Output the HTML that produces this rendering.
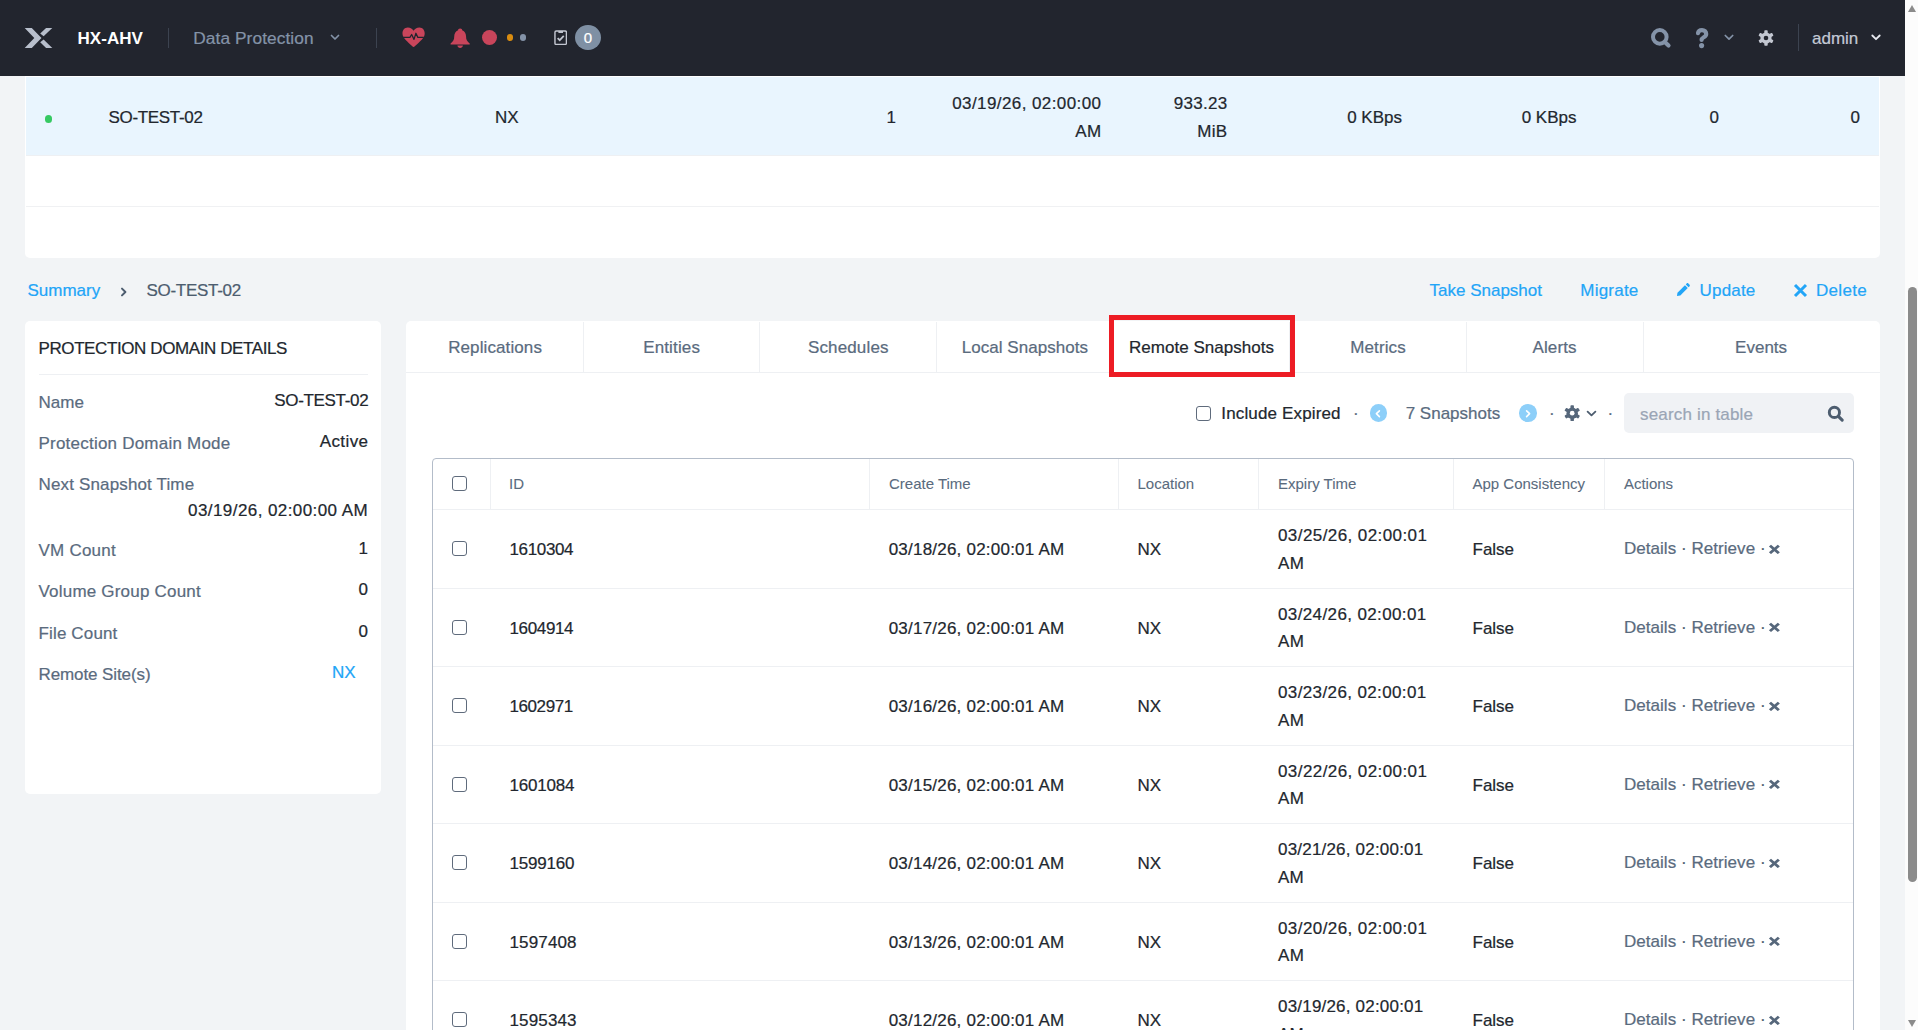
<!DOCTYPE html>
<html lang="en">
<head>
<meta charset="utf-8">
<title>HX-AHV - Data Protection</title>
<style>
*{box-sizing:border-box;}
html,body{margin:0;padding:0;}
html{overflow:hidden;}
body{width:1918px;height:1030px;overflow:hidden;position:relative;background:#f2f4f6;
  font-family:"Liberation Sans",sans-serif;font-size:17px;color:#22272e;-webkit-text-stroke:0.22px currentColor;}
.abs{position:absolute;}
.nw{white-space:nowrap;}
/* ---------- header ---------- */
#hdr{position:absolute;left:0;top:0;width:1905px;height:76px;background:#22252e;z-index:5;}
#hdr .t{position:absolute;white-space:nowrap;line-height:20px;top:29.2px;}
.vsep{position:absolute;width:1px;background:#3c4350;}
/* ---------- scrollbar ---------- */
#sb{position:absolute;left:1905px;top:0;width:13px;height:1030px;background:#fcfcfc;}
#sb .thumb{position:absolute;left:3px;top:287px;width:9px;height:595px;border-radius:5px;background:#8b8b8b;}
#sb .up{position:absolute;left:3px;top:5px;width:0;height:0;border-left:4.5px solid transparent;border-right:4.5px solid transparent;border-bottom:7px solid #8b8b8b;}
#sb .dn{position:absolute;left:3px;top:1020px;width:0;height:0;border-left:4.5px solid transparent;border-right:4.5px solid transparent;border-top:7px solid #8b8b8b;}
/* ---------- top table card ---------- */
#topcard{position:absolute;left:25px;top:70px;width:1855px;height:188px;background:#fff;border-radius:5px;}
#selrow{position:absolute;left:1px;top:7px;width:1853px;height:79px;background:#e9f5fe;border-bottom:1px solid #eef0f3;}
#topcard .ln{position:absolute;left:1px;width:1853px;height:1px;background:#f0f1f3;top:136px;}
.rt{position:absolute;white-space:nowrap;line-height:28px;}
/* ---------- breadcrumb / actions ---------- */
.bc{position:absolute;top:279px;line-height:24px;white-space:nowrap;}
.lnk{color:#22a5f7;}
/* ---------- left card ---------- */
#lcard{position:absolute;left:25px;top:321px;width:356px;height:473px;background:#fff;border-radius:5px;}
#lcard .lab{position:absolute;left:13.5px;color:#5a6b7e;white-space:nowrap;line-height:20px;}
#lcard .val{position:absolute;right:13px;white-space:nowrap;line-height:20px;color:#22272e;}
/* ---------- right card ---------- */
#rcard{position:absolute;left:406px;top:321px;width:1474px;height:720px;background:#fff;border-radius:5px 5px 0 0;}
.tab{position:absolute;top:0.8px;height:51px;line-height:52px;text-align:center;color:#5a6b7e;white-space:nowrap;}
#tabline{position:absolute;left:0;top:51px;width:1474px;height:1px;background:#eef0f3;}
#redbox{position:absolute;left:1109px;top:315px;width:186px;height:62px;border:5px solid #ed1c24;}
/* ---------- snapshot table ---------- */
#tbl{position:absolute;left:432px;top:458px;width:1422px;height:600px;border:1px solid #b3bcc9;border-radius:4px 4px 0 0;}
#tbl .hl{position:absolute;left:0;width:1420px;height:1px;background:#eef0f3;}
#tbl .vl{position:absolute;top:0;width:1px;height:50px;background:#eef0f3;}
#tbl .th{position:absolute;top:15.3px;line-height:20px;font-size:15px;color:#5a6b7e;white-space:nowrap;-webkit-text-stroke:0.08px currentColor;}
#tbl .td{position:absolute;white-space:nowrap;line-height:27.5px;color:#22272e;}
#tbl .ac{color:#5a6b7e;}
.tdot{color:#5a6b7e;line-height:20px;}
.dot{color:#4d5d6f;}
.cb{position:absolute;width:15px;height:15px;border:1.5px solid #5f6b7c;border-radius:3px;background:#fff;}
</style>
</head>
<body>

<!-- HEADER -->
<div id="hdr">
  <!-- logo X -->
  <svg class="abs" style="left:20px;top:22px" width="40" height="32" viewBox="0 0 40 32">
    <path d="M4.7 5.9 L11.8 5.9 L21.5 16 L11.8 25.9 L4.7 25.9 L14.3 16 Z" fill="#b8bfcc"/>
    <path d="M26.1 5.9 L32.3 5.9 L23.6 14.3 L20.2 11.5 Z" fill="#b8bfcc"/>
    <path d="M20.2 20.3 L23.6 17.5 L32.3 25.9 L26.1 25.9 Z" fill="#b8bfcc"/>
  </svg>
  <div class="t" style="left:77.5px;font-weight:bold;color:#fff;font-size:17px;letter-spacing:0.05px;-webkit-text-stroke:0">HX-AHV</div>
  <div class="vsep" style="left:168px;top:28px;height:20px"></div>
  <div class="t" style="left:193.3px;top:28.3px;color:#8493a8;font-size:17.3px;letter-spacing:0.08px">Data Protection</div>
  <svg class="abs" style="left:330px;top:34px" width="10" height="8" viewBox="0 0 10 8"><path d="M1.5 1.5 L5 5 L8.5 1.5" fill="none" stroke="#8493a8" stroke-width="1.7" stroke-linecap="round" stroke-linejoin="round"/></svg>
  <div class="vsep" style="left:376px;top:28px;height:20px"></div>
  <!-- heart -->
  <svg class="abs" style="left:401.7px;top:27.1px" width="23.2" height="20.6" viewBox="0 0 24 21" preserveAspectRatio="none">
    <path d="M12 20.5 C11 19.6 3.2 13.6 1.2 9.6 C-0.6 5.8 1.2 0.6 6 0.6 C8.8 0.6 10.8 2 12 3.8 C13.2 2 15.2 0.6 18 0.6 C22.8 0.6 24.6 5.8 22.8 9.6 C20.8 13.6 13 19.6 12 20.5 Z" fill="#c9455b"/>
    <path d="M1 10.6 L8.2 10.6 L10 7.6 L12.4 12.6 L14.4 6.4 L16.4 10.6 L22.6 10.6" fill="none" stroke="#22252e" stroke-width="1.3" stroke-linejoin="round"/>
  </svg>
  <!-- bell -->
  <svg class="abs" style="left:449.8px;top:27.6px" width="20.3" height="20.4" viewBox="0 0 21 21" preserveAspectRatio="none">
    <path d="M10.5 0.5 C12 0.5 12.6 1.4 12.6 2.2 C15.4 3.2 16.6 5.8 16.6 8.6 C16.6 12.4 17.8 14.2 20.4 16 L20.4 17 L0.6 17 L0.6 16 C3.2 14.2 4.4 12.4 4.4 8.6 C4.4 5.8 5.6 3.2 8.4 2.2 C8.4 1.4 9 0.5 10.5 0.5 Z" fill="#c9455b"/>
    <path d="M7.6 18 L13.4 18 C13.2 19.6 12 20.5 10.5 20.5 C9 20.5 7.8 19.6 7.6 18 Z" fill="#c9455b"/>
  </svg>
  <div class="abs" style="left:481.5px;top:29.6px;width:15.6px;height:15.6px;border-radius:50%;background:#c9455b"></div>
  <div class="abs" style="left:506.6px;top:34.1px;width:6.6px;height:6.6px;border-radius:50%;background:#d98c10"></div>
  <div class="abs" style="left:519.6px;top:34.1px;width:6.6px;height:6.6px;border-radius:50%;background:#8493a8"></div>
  <!-- clipboard -->
  <svg class="abs" style="left:553.7px;top:29.8px" width="13.4" height="15.4" viewBox="0 0 14 16" preserveAspectRatio="none">
    <rect x="1" y="1" width="12" height="14" rx="1.3" fill="none" stroke="#c3c7d1" stroke-width="1.5"/>
    <rect x="4.6" y="1" width="4.8" height="2.1" fill="#c3c7d1"/>
    <path d="M3.8 8.4 L6 10.6 L10.2 6.2" fill="none" stroke="#c3c7d1" stroke-width="1.8"/>
  </svg>
  <div class="abs" style="left:574.8px;top:24.5px;width:26.2px;height:25.8px;border-radius:50%;background:#7f90a4;color:#fff;text-align:center;line-height:25.4px;font-size:15px">0</div>
  <!-- right side -->
  <svg class="abs" style="left:1648px;top:26px" width="26" height="24" viewBox="0 0 26 24">
    <circle cx="11.8" cy="10.9" r="6.8" fill="none" stroke="#8493a8" stroke-width="4"/>
    <path d="M16.8 15.9 L20.5 19.5" stroke="#8493a8" stroke-width="4.2" stroke-linecap="round"/>
  </svg>
  <svg class="abs" style="left:1694px;top:26px" width="16" height="24" viewBox="0 0 16 24">
    <path d="M4 7.2 C4.4 4.8 6.2 4.1 8 4.1 C10.4 4.1 12.2 5.6 12.2 7.9 C12.2 11.4 7.6 11 7.6 14" fill="none" stroke="#8493a8" stroke-width="4.2" stroke-linecap="round" stroke-linejoin="round"/>
    <circle cx="7.6" cy="19.6" r="2.55" fill="#8493a8"/>
  </svg>
  <svg class="abs" style="left:1723.5px;top:34px" width="10" height="8" viewBox="0 0 10 8"><path d="M1.3 1.5 L5 5.2 L8.7 1.5" fill="none" stroke="#8493a8" stroke-width="1.7" stroke-linecap="round" stroke-linejoin="round"/></svg>
  <!-- gear -->
  <svg class="abs" style="left:1757.5px;top:29.7px" width="16" height="16" viewBox="0 0 16 16">
    <g fill="#c3c7d1">
      <circle cx="8" cy="8" r="5.6"/>
      <rect x="6.3" y="0.2" width="3.4" height="15.6" rx="0.8"/>
      <rect x="6.3" y="0.2" width="3.4" height="15.6" rx="0.8" transform="rotate(60 8 8)"/>
      <rect x="6.3" y="0.2" width="3.4" height="15.6" rx="0.8" transform="rotate(120 8 8)"/>
    </g>
    <circle cx="8" cy="8" r="2.3" fill="#22252e"/>
  </svg>
  <div class="vsep" style="left:1798px;top:24px;height:27px"></div>
  <div class="t" style="left:1812px;color:#c3c9d5;font-size:17px">admin</div>
  <svg class="abs" style="left:1870.5px;top:34px" width="10" height="8" viewBox="0 0 10 8"><path d="M1.3 1.5 L5 5.2 L8.7 1.5" fill="none" stroke="#e8eaf0" stroke-width="1.8" stroke-linecap="round" stroke-linejoin="round"/></svg>
</div>

<!-- TOP TABLE CARD -->
<div id="topcard">
  <div id="selrow"></div>
  <div class="ln"></div>
  <div class="abs" style="left:19.8px;top:45.3px;width:7.4px;height:7.4px;border-radius:50%;background:#36c962"></div>
  <div class="rt" style="left:83.5px;top:34.2px;letter-spacing:-0.32px">SO-TEST-02</div>
  <div class="rt" style="left:470px;top:34.2px">NX</div>
  <div class="rt" style="right:984px;top:34.2px">1</div>
  <div class="rt" style="right:778.5px;top:20.2px;text-align:right;letter-spacing:0.42px">03/19/26, 02:00:00<br>AM</div>
  <div class="rt" style="right:652.5px;top:20.2px;text-align:right;letter-spacing:0.3px">933.23<br>MiB</div>
  <div class="rt" style="right:478px;top:34.2px">0 KBps</div>
  <div class="rt" style="right:303.5px;top:34.2px">0 KBps</div>
  <div class="rt" style="right:161px;top:34.2px">0</div>
  <div class="rt" style="right:20px;top:34.2px">0</div>
</div>

<!-- BREADCRUMB + ACTIONS -->
<div class="bc lnk" style="left:27.5px">Summary</div>
<svg class="abs" style="left:119.5px;top:286px" width="9" height="12" viewBox="0 0 9 12"><path d="M2 2.6 L5.4 6 L2 9.4" fill="none" stroke="#4d5d6f" stroke-width="2" stroke-linecap="round" stroke-linejoin="round"/></svg>
<div class="bc" style="left:146.5px;color:#4d5d6f;letter-spacing:-0.3px">SO-TEST-02</div>
<div class="bc lnk" style="left:1429.5px">Take Snapshot</div>
<div class="bc lnk" style="left:1580.3px;letter-spacing:0.22px">Migrate</div>
<svg class="abs" style="left:1676.4px;top:282.6px" width="14" height="14" viewBox="0 0 15 15">
  <path d="M1 14 L1.6 10.4 L9.6 2.4 L12.6 5.4 L4.6 13.4 Z" fill="#22a5f7"/>
  <path d="M10.5 1.5 L11.6 0.4 C12 0 12.6 0 13 0.4 L14.6 2 C15 2.4 15 3 14.6 3.4 L13.5 4.5 Z" fill="#22a5f7"/>
</svg>
<div class="bc lnk" style="left:1699.5px;letter-spacing:0.2px">Update</div>
<svg class="abs" style="left:1792.5px;top:282.5px" width="15" height="15" viewBox="0 0 15 15"><path d="M2 2 L13 13 M13 2 L2 13" stroke="#22a5f7" stroke-width="3" stroke-linecap="butt"/></svg>
<div class="bc lnk" style="left:1816px;letter-spacing:0.3px">Delete</div>

<!-- LEFT CARD -->
<div id="lcard">
  <div class="lab" style="top:18.4px;color:#22272e;letter-spacing:-0.4px">PROTECTION DOMAIN DETAILS</div>
  <div class="abs" style="left:13.5px;top:53px;width:329.5px;height:1px;background:#eef0f3"></div>
  <div class="lab" style="top:72.0px">Name</div>
  <div class="val" style="top:70.4px;letter-spacing:-0.32px;right:12.7px">SO-TEST-02</div>
  <div class="lab" style="top:113.4px;letter-spacing:0.22px">Protection Domain Mode</div>
  <div class="val" style="top:111.2px;letter-spacing:0.4px;right:12.6px">Active</div>
  <div class="lab" style="top:154.3px;letter-spacing:0.15px">Next Snapshot Time</div>
  <div class="val" style="top:179.6px;letter-spacing:0.42px">03/19/26, 02:00:00 AM</div>
  <div class="lab" style="top:220.0px;letter-spacing:0.22px">VM Count</div>
  <div class="val" style="top:217.8px">1</div>
  <div class="lab" style="top:261.2px;letter-spacing:0.2px">Volume Group Count</div>
  <div class="val" style="top:259.0px">0</div>
  <div class="lab" style="top:302.8px;letter-spacing:0.15px">File Count</div>
  <div class="val" style="top:300.6px">0</div>
  <div class="lab" style="top:344.0px;letter-spacing:-0.1px">Remote Site(s)</div>
  <div class="val lnk" style="top:342.0px;right:25.5px;color:#22a5f7">NX</div>
</div>

<!-- RIGHT CARD -->
<div id="rcard">
  <div class="tab" style="left:9.1px;width:160px;letter-spacing:0.1px">Replications</div>
  <div class="tab" style="left:185.65px;width:160px;letter-spacing:0.15px">Entities</div>
  <div class="tab" style="left:362.3px;width:160px;letter-spacing:0.15px">Schedules</div>
  <div class="tab" style="left:538.9px;width:160px;letter-spacing:0.05px">Local Snapshots</div>
  <div class="tab" style="left:715.5px;width:160px;letter-spacing:0.02px;color:#22272e">Remote Snapshots</div>
  <div class="tab" style="left:892px;width:160px;letter-spacing:0.12px">Metrics</div>
  <div class="tab" style="left:1068.6px;width:160px;letter-spacing:0.15px">Alerts</div>
  <div class="tab" style="left:1275.1px;width:160px;letter-spacing:0px">Events</div>
  <div class="abs" style="left:177px;top:1px;width:1px;height:50px;background:#eef0f3"></div>
  <div class="abs" style="left:353px;top:1px;width:1px;height:50px;background:#eef0f3"></div>
  <div class="abs" style="left:530px;top:1px;width:1px;height:50px;background:#eef0f3"></div>
  <div class="abs" style="left:707px;top:1px;width:1px;height:50px;background:#eef0f3"></div>
  <div class="abs" style="left:883px;top:1px;width:1px;height:50px;background:#eef0f3"></div>
  <div class="abs" style="left:1060px;top:1px;width:1px;height:50px;background:#eef0f3"></div>
  <div class="abs" style="left:1237px;top:1px;width:1px;height:50px;background:#eef0f3"></div>
  <div id="tabline"></div>
</div>

<!-- TOOLBAR -->
<div class="cb" style="left:1196px;top:406px"></div>
<div class="abs nw" style="left:1221.3px;top:404px;line-height:20px;letter-spacing:0.15px">Include Expired</div>
<div class="abs nw tdot" style="left:1353px;top:404px">·</div>
<div class="abs" style="left:1369.8px;top:404.3px;width:17.6px;height:17.6px;border-radius:50%;background:#8dcff9"></div>
<svg class="abs" style="left:1374px;top:408.5px" width="8" height="10" viewBox="0 0 8 10"><path d="M5.4 1.8 L2.4 4.7 L5.4 7.6" fill="none" stroke="#fff" stroke-width="1.6" stroke-linecap="round" stroke-linejoin="round"/></svg>
<div class="abs nw" style="left:1405.7px;top:404px;line-height:20px;color:#5a6b7e;letter-spacing:0px">7 Snapshots</div>
<div class="abs" style="left:1519px;top:404.3px;width:17.6px;height:17.6px;border-radius:50%;background:#8dcff9"></div>
<svg class="abs" style="left:1524.4px;top:408.5px" width="8" height="10" viewBox="0 0 8 10"><path d="M2.6 1.8 L5.6 4.7 L2.6 7.6" fill="none" stroke="#fff" stroke-width="1.6" stroke-linecap="round" stroke-linejoin="round"/></svg>
<div class="abs nw tdot" style="left:1549px;top:404px">·</div>
<svg class="abs" style="left:1564px;top:405px" width="16.4" height="16.4" viewBox="0 0 16 16">
  <g fill="#56677b">
    <circle cx="8" cy="8" r="5.6"/>
    <rect x="6.3" y="0.2" width="3.4" height="15.6" rx="0.8"/>
    <rect x="6.3" y="0.2" width="3.4" height="15.6" rx="0.8" transform="rotate(60 8 8)"/>
    <rect x="6.3" y="0.2" width="3.4" height="15.6" rx="0.8" transform="rotate(120 8 8)"/>
  </g>
  <circle cx="8" cy="8" r="2.3" fill="#fff"/>
</svg>
<svg class="abs" style="left:1586px;top:409.5px" width="11" height="8" viewBox="0 0 11 8"><path d="M1.6 1.6 L5.5 5.4 L9.4 1.6" fill="none" stroke="#4d5d6f" stroke-width="1.8" stroke-linecap="round" stroke-linejoin="round"/></svg>
<div class="abs nw tdot" style="left:1607.5px;top:404px">·</div>
<div class="abs" style="left:1624.3px;top:392.6px;width:229.4px;height:40.4px;border-radius:5px;background:#f0f2f5"></div>
<div class="abs nw" style="left:1640px;top:404.5px;line-height:20px;color:#9aa5b5;letter-spacing:0.17px">search in table</div>
<svg class="abs" style="left:1826.5px;top:404.5px" width="18" height="18" viewBox="0 0 18 18">
  <circle cx="7.4" cy="7.4" r="5.1" fill="none" stroke="#4d5d6f" stroke-width="2.9"/>
  <path d="M11.4 11.4 L15.2 15.2" stroke="#4d5d6f" stroke-width="3.1" stroke-linecap="round"/>
</svg>

<!-- SNAPSHOT TABLE -->
<div id="tbl">
  <div class="cb" style="left:19px;top:16.6px"></div>
  <div class="vl" style="left:57px"></div>
  <div class="vl" style="left:436px"></div>
  <div class="vl" style="left:685px"></div>
  <div class="vl" style="left:825px"></div>
  <div class="vl" style="left:1020px"></div>
  <div class="vl" style="left:1171px"></div>
  <div class="th" style="left:76px">ID</div>
  <div class="th" style="left:456px">Create Time</div>
  <div class="th" style="left:704.5px">Location</div>
  <div class="th" style="left:845px">Expiry Time</div>
  <div class="th" style="left:1039.5px">App Consistency</div>
  <div class="th" style="left:1190.9px">Actions</div>
  <div class="hl" style="top:50px"></div>
  <div class="hl" style="top:129px"></div>
  <div class="cb" style="left:19px;top:82.3px"></div>
  <div class="td" style="left:76.5px;top:77.15px;letter-spacing:-0.36px">1610304</div>
  <div class="td" style="left:455.7px;top:77.15px;letter-spacing:0.22px">03/18/26, 02:00:01 AM</div>
  <div class="td" style="left:704.5px;top:77.15px">NX</div>
  <div class="td" style="left:845px;top:63.4px;letter-spacing:0.42px">03/25/26, 02:00:01<br>AM</div>
  <div class="td" style="left:1039.5px;top:77.15px">False</div>
  <div class="td ac" style="left:1190.9px;top:76.05px;letter-spacing:0.05px">Details <span class="dot">·</span> Retrieve <span class="dot">·</span></div>
  <svg class="abs" style="left:1335.1px;top:84.5px" width="12.8" height="10.9" viewBox="0 0 13 13" preserveAspectRatio="none"><path d="M2 2 L11 11 M11 2 L2 11" stroke="#56677b" stroke-width="3"/></svg>
  <div class="hl" style="top:207px"></div>
  <div class="cb" style="left:19px;top:160.8px"></div>
  <div class="td" style="left:76.5px;top:155.65px;letter-spacing:-0.36px">1604914</div>
  <div class="td" style="left:455.7px;top:155.65px;letter-spacing:0.22px">03/17/26, 02:00:01 AM</div>
  <div class="td" style="left:704.5px;top:155.65px">NX</div>
  <div class="td" style="left:845px;top:141.9px;letter-spacing:0.38px">03/24/26, 02:00:01<br>AM</div>
  <div class="td" style="left:1039.5px;top:155.65px">False</div>
  <div class="td ac" style="left:1190.9px;top:154.55px;letter-spacing:0.05px">Details <span class="dot">·</span> Retrieve <span class="dot">·</span></div>
  <svg class="abs" style="left:1335.1px;top:163.0px" width="12.8" height="10.9" viewBox="0 0 13 13" preserveAspectRatio="none"><path d="M2 2 L11 11 M11 2 L2 11" stroke="#56677b" stroke-width="3"/></svg>
  <div class="hl" style="top:286px"></div>
  <div class="cb" style="left:19px;top:239.3px"></div>
  <div class="td" style="left:76.5px;top:234.15px;letter-spacing:-0.42px">1602971</div>
  <div class="td" style="left:455.7px;top:234.15px;letter-spacing:0.22px">03/16/26, 02:00:01 AM</div>
  <div class="td" style="left:704.5px;top:234.15px">NX</div>
  <div class="td" style="left:845px;top:220.4px;letter-spacing:0.38px">03/23/26, 02:00:01<br>AM</div>
  <div class="td" style="left:1039.5px;top:234.15px">False</div>
  <div class="td ac" style="left:1190.9px;top:233.05px;letter-spacing:0.05px">Details <span class="dot">·</span> Retrieve <span class="dot">·</span></div>
  <svg class="abs" style="left:1335.1px;top:241.5px" width="12.8" height="10.9" viewBox="0 0 13 13" preserveAspectRatio="none"><path d="M2 2 L11 11 M11 2 L2 11" stroke="#56677b" stroke-width="3"/></svg>
  <div class="hl" style="top:364px"></div>
  <div class="cb" style="left:19px;top:317.8px"></div>
  <div class="td" style="left:76.5px;top:312.65px;letter-spacing:-0.2px">1601084</div>
  <div class="td" style="left:455.7px;top:312.65px;letter-spacing:0.22px">03/15/26, 02:00:01 AM</div>
  <div class="td" style="left:704.5px;top:312.65px">NX</div>
  <div class="td" style="left:845px;top:298.9px;letter-spacing:0.42px">03/22/26, 02:00:01<br>AM</div>
  <div class="td" style="left:1039.5px;top:312.65px">False</div>
  <div class="td ac" style="left:1190.9px;top:311.55px;letter-spacing:0.05px">Details <span class="dot">·</span> Retrieve <span class="dot">·</span></div>
  <svg class="abs" style="left:1335.1px;top:320.0px" width="12.8" height="10.9" viewBox="0 0 13 13" preserveAspectRatio="none"><path d="M2 2 L11 11 M11 2 L2 11" stroke="#56677b" stroke-width="3"/></svg>
  <div class="hl" style="top:443px"></div>
  <div class="cb" style="left:19px;top:396.3px"></div>
  <div class="td" style="left:76.5px;top:391.15px;letter-spacing:-0.2px">1599160</div>
  <div class="td" style="left:455.7px;top:391.15px;letter-spacing:0.22px">03/14/26, 02:00:01 AM</div>
  <div class="td" style="left:704.5px;top:391.15px">NX</div>
  <div class="td" style="left:845px;top:377.4px;letter-spacing:0.2px">03/21/26, 02:00:01<br>AM</div>
  <div class="td" style="left:1039.5px;top:391.15px">False</div>
  <div class="td ac" style="left:1190.9px;top:390.05px;letter-spacing:0.05px">Details <span class="dot">·</span> Retrieve <span class="dot">·</span></div>
  <svg class="abs" style="left:1335.1px;top:398.5px" width="12.8" height="10.9" viewBox="0 0 13 13" preserveAspectRatio="none"><path d="M2 2 L11 11 M11 2 L2 11" stroke="#56677b" stroke-width="3"/></svg>
  <div class="hl" style="top:521px"></div>
  <div class="cb" style="left:19px;top:474.8px"></div>
  <div class="td" style="left:76.5px;top:469.65px;letter-spacing:0.14px">1597408</div>
  <div class="td" style="left:455.7px;top:469.65px;letter-spacing:0.22px">03/13/26, 02:00:01 AM</div>
  <div class="td" style="left:704.5px;top:469.65px">NX</div>
  <div class="td" style="left:845px;top:455.9px;letter-spacing:0.42px">03/20/26, 02:00:01<br>AM</div>
  <div class="td" style="left:1039.5px;top:469.65px">False</div>
  <div class="td ac" style="left:1190.9px;top:468.55px;letter-spacing:0.05px">Details <span class="dot">·</span> Retrieve <span class="dot">·</span></div>
  <svg class="abs" style="left:1335.1px;top:477.0px" width="12.8" height="10.9" viewBox="0 0 13 13" preserveAspectRatio="none"><path d="M2 2 L11 11 M11 2 L2 11" stroke="#56677b" stroke-width="3"/></svg>
  <div class="hl" style="top:600px"></div>
  <div class="cb" style="left:19px;top:553.3px"></div>
  <div class="td" style="left:76.5px;top:548.15px;letter-spacing:0.14px">1595343</div>
  <div class="td" style="left:455.7px;top:548.15px;letter-spacing:0.22px">03/12/26, 02:00:01 AM</div>
  <div class="td" style="left:704.5px;top:548.15px">NX</div>
  <div class="td" style="left:845px;top:534.4px;letter-spacing:0.2px">03/19/26, 02:00:01<br>AM</div>
  <div class="td" style="left:1039.5px;top:548.15px">False</div>
  <div class="td ac" style="left:1190.9px;top:547.05px;letter-spacing:0.05px">Details <span class="dot">·</span> Retrieve <span class="dot">·</span></div>
  <svg class="abs" style="left:1335.1px;top:555.5px" width="12.8" height="10.9" viewBox="0 0 13 13" preserveAspectRatio="none"><path d="M2 2 L11 11 M11 2 L2 11" stroke="#56677b" stroke-width="3"/></svg>
</div>

<div id="redbox"></div>

<!-- SCROLLBAR -->
<div id="sb"><div class="up"></div><div class="thumb"></div><div class="dn"></div></div>

</body>
</html>
